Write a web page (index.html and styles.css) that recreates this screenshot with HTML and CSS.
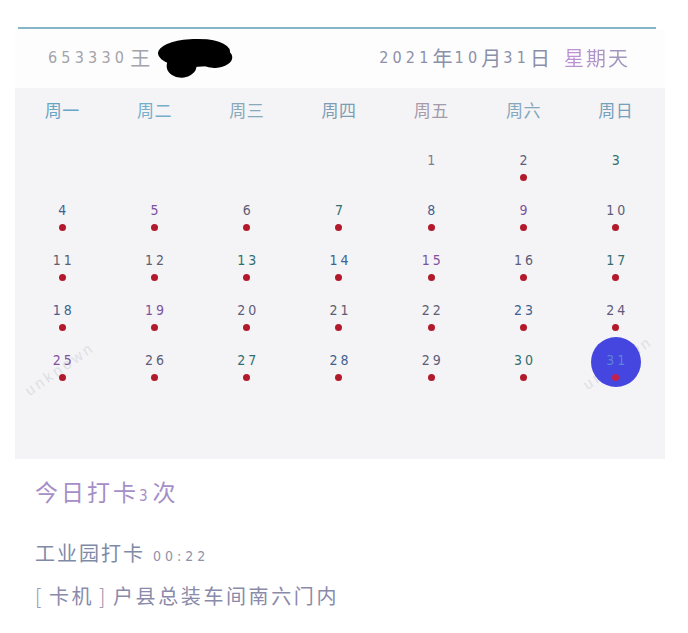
FILE: index.html
```html
<!DOCTYPE html>
<html lang="zh">
<head>
<meta charset="utf-8">
<title>打卡日历</title>
<link rel="stylesheet" href="styles.css">
</head>
<body>
<div class="card">
  <div class="topline"></div>
  <div class="header">
    <div class="user"><span class="num">653330</span><span class="cjk">王</span><span class="blot"></span></div>
    <div class="date"><span class="num">2021</span><span class="cjk">年</span><span class="num">10</span><span class="cjk">月</span><span class="num">31</span><span class="cjk">日</span><span class="cjk week">星期天</span></div>
  </div>
  <div class="calendar">
    <div class="wm wm-left">unknown</div>
    <div class="wm wm-right">unknown</div>
    <div class="weekdays">
      <span class="wd c1">周一</span><span class="wd c2">周二</span><span class="wd c3">周三</span><span class="wd c4">周四</span><span class="wd c5">周五</span><span class="wd c6">周六</span><span class="wd c7">周日</span>
    </div>
    <div class="days">
      <div class="day"></div><div class="day"></div><div class="day"></div><div class="day"></div>
      <div class="day"><span class="n g1">1</span></div>
      <div class="day"><span class="n g2">2</span><i class="dot"></i></div>
      <div class="day"><span class="n g3">3</span></div>

      <div class="day"><span class="n g4">4</span><i class="dot"></i></div>
      <div class="day"><span class="n g5">5</span><i class="dot"></i></div>
      <div class="day"><span class="n g6">6</span><i class="dot"></i></div>
      <div class="day"><span class="n g3">7</span><i class="dot"></i></div>
      <div class="day"><span class="n g4">8</span><i class="dot"></i></div>
      <div class="day"><span class="n g5">9</span><i class="dot"></i></div>
      <div class="day"><span class="n g2">10</span><i class="dot"></i></div>

      <div class="day"><span class="n g6">11</span><i class="dot"></i></div>
      <div class="day"><span class="n g6">12</span><i class="dot"></i></div>
      <div class="day"><span class="n g3">13</span><i class="dot"></i></div>
      <div class="day"><span class="n g4">14</span><i class="dot"></i></div>
      <div class="day"><span class="n g5">15</span><i class="dot"></i></div>
      <div class="day"><span class="n g2">16</span><i class="dot"></i></div>
      <div class="day"><span class="n g3">17</span><i class="dot"></i></div>

      <div class="day"><span class="n g4">18</span><i class="dot"></i></div>
      <div class="day"><span class="n g5">19</span><i class="dot"></i></div>
      <div class="day"><span class="n g2">20</span><i class="dot"></i></div>
      <div class="day"><span class="n g6">21</span><i class="dot"></i></div>
      <div class="day"><span class="n g6">22</span><i class="dot"></i></div>
      <div class="day"><span class="n g4">23</span><i class="dot"></i></div>
      <div class="day"><span class="n g2">24</span><i class="dot"></i></div>

      <div class="day"><span class="n g5">25</span><i class="dot"></i></div>
      <div class="day"><span class="n g2">26</span><i class="dot"></i></div>
      <div class="day"><span class="n g3">27</span><i class="dot"></i></div>
      <div class="day"><span class="n g4">28</span><i class="dot"></i></div>
      <div class="day"><span class="n g2">29</span><i class="dot"></i></div>
      <div class="day"><span class="n g3">30</span><i class="dot"></i></div>
      <div class="day today"><span class="circle"></span><span class="n sel">31</span><i class="dot"></i></div>
    </div>
  </div>
  <div class="summary">
    <div class="count">今日打卡<span class="small">3</span>次</div>
    <div class="record">工业园打卡<span class="time">00:22</span></div>
    <div class="place"><span class="br">[</span>卡机<span class="br">]</span>户县总装车间南六门内</div>
  </div>
</div>
</body>
</html>
```

FILE: styles.css
```css
* { box-sizing: border-box; }
html, body { margin: 0; padding: 0; background: #ffffff; }
body {
  width: 688px;
  height: 633px;
  overflow: hidden;
  font-family: "Noto Sans CJK SC", "Noto Sans", sans-serif;
}
.card {
  margin-left: 15px;
  width: 650px;
}
.topline {
  margin: 27px 9px 0 3px;
  height: 2px;
  background: #86b4c9;
}
.header {
  height: 59px;
  display: flex;
  align-items: center;
  justify-content: space-between;
  padding: 0 35px 2px 33px;
  background: #fdfdfd;
}
.header .num {
  font-family: "DejaVu Sans Condensed", "Liberation Sans", sans-serif;
  font-size: 16px;
  letter-spacing: 4.2px;
}
.header .cjk { font-size: 20px; }
.user {
  position: relative;
  display: flex;
  align-items: center;
  color: #a3a3ab;
}
.user .cjk { margin-left: 2px; }
.blot {
  position: absolute;
  left: 110px;
  top: -4px;
  width: 72px;
  height: 28px;
  background: #000;
  border-radius: 45% 50% 40% 55%;
  transform: rotate(-3deg);
}
.blot::after {
  content: "";
  position: absolute;
  left: 8px;
  top: 14px;
  width: 30px;
  height: 24px;
  background: #000;
  border-radius: 50%;
}
.blot::before {
  content: "";
  position: absolute;
  left: 40px;
  top: 10px;
  width: 34px;
  height: 20px;
  background: #000;
  border-radius: 50%;
}
.date {
  display: flex;
  align-items: center;
  color: #8b90aa;
}
.date .num { margin-left: 2px; }
.date .week {
  margin-left: 14px;
  letter-spacing: 2px;
  background: linear-gradient(90deg, #c090d8, #9a98b8);
  -webkit-background-clip: text;
  background-clip: text;
  color: transparent;
}
.calendar {
  position: relative;
  height: 371px;
  background: #f4f4f6;
  overflow: hidden;
}
.weekdays {
  display: grid;
  grid-template-columns: repeat(7, 1fr);
  padding: 11px 3px 0 1px;
  height: 62px;
}
.wd {
  text-align: center;
  font-size: 17px;
  line-height: 22px;
  letter-spacing: 0.5px;
}
.c1 { color: #68a4c4; }
.c2 { color: #74aecb; }
.c3 { color: #86a9bb; }
.c4 { color: #7d9db4; }
.c5 { color: #a49aab; }
.c6 { color: #84a8bb; }
.c7 { color: #76a0ba; }
.days {
  display: grid;
  grid-template-columns: repeat(7, 1fr);
  grid-auto-rows: 50px;
  padding: 0 3px 0 1px;
}
.day {
  position: relative;
  display: flex;
  flex-direction: column;
  align-items: center;
  padding-top: 2px;
}
.n {
  position: relative;
  font-family: "DejaVu Sans Condensed", "Liberation Sans", sans-serif;
  font-size: 14px;
  line-height: 16px;
  letter-spacing: 3px;
  margin-right: -3px;
}
.g1 { color: #7e7e90; }
.g2 { color: #5e5c7a; }
.g3 { color: #2f6f70; }
.g4 { color: #3e6192; }
.g5 { color: #7e52a0; }
.g6 { color: #5e5e72; }
.dot {
  position: relative;
  display: block;
  margin-top: 6px;
  width: 7px;
  height: 7px;
  border-radius: 50%;
  background: #b21a2c;
}
.today .circle {
  position: absolute;
  left: 50%;
  top: -13px;
  width: 50px;
  height: 50px;
  margin-left: -25px;
  border-radius: 50%;
  background: #4545e0;
}
.today .sel { color: #5a84d8; }
.today .dot { background: #c4204a; }
.wm {
  position: absolute;
  font-family: "Liberation Sans", sans-serif;
  font-size: 15px;
  letter-spacing: 3px;
  color: #dedee6;
  transform: rotate(-35deg);
}
.wm-left { left: 4px; top: 272px; }
.wm-right { left: 562px; top: 266px; }
.summary {
  padding: 17px 0 0 20px;
}
.count {
  font-size: 23px;
  line-height: 30px;
  color: #a58fc6;
  letter-spacing: 3px;
}
.count .small {
  font-family: "DejaVu Sans Condensed", "Liberation Sans", sans-serif;
  font-size: 15px;
  margin: 0 2px 0 0;
}
.record {
  margin-top: 29px;
  font-size: 20px;
  line-height: 26px;
  color: #7f8aa6;
  letter-spacing: 2px;
  display: flex;
  align-items: baseline;
}
.record .time {
  margin-left: 8px;
  font-family: "DejaVu Sans Condensed", "Liberation Sans", sans-serif;
  font-size: 14px;
  letter-spacing: 4px;
  color: #8e93aa;
}
.place {
  margin-top: 14px;
  font-size: 20px;
  line-height: 26px;
  color: #8a8aaa;
  letter-spacing: 2.6px;
}
.place .br {
  display: inline-block;
  font-weight: 300;
  margin: 0 5px 0 0;
}
.place .br + .br { margin: 0 5px; }
```
